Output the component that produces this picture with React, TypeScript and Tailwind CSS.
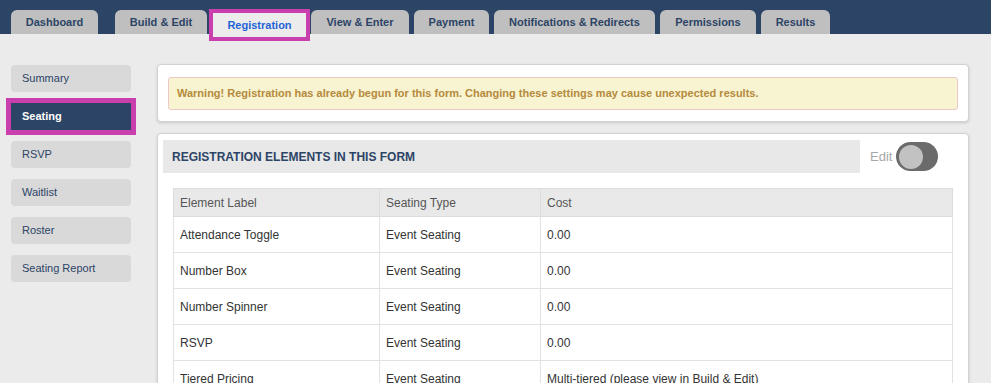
import type { ReactElement } from 'react'

const tabs: Array<{ label: string; cls: string; active?: boolean }> = [
  { label: 'Dashboard', cls: 'ml-[11px] w-[87px]' },
  { label: 'Build & Edit', cls: 'ml-[17px] w-[92px]' },
  { label: 'Registration', cls: 'ml-[2px] w-[101px]', active: true },
  { label: 'View & Enter', cls: 'ml-[1px] w-[98px]' },
  { label: 'Payment', cls: 'ml-[5px] w-[75px]' },
  { label: 'Notifications & Redirects', cls: 'ml-[5px] w-[161px]' },
  { label: 'Permissions', cls: 'ml-[5px] w-[96px]' },
  { label: 'Results', cls: 'ml-[5px] w-[69px]' },
]

const sideItems = ['Summary', 'Seating', 'RSVP', 'Waitlist', 'Roster', 'Seating Report']

const rows: Array<[string, string, string]> = [
  ['Attendance Toggle', 'Event Seating', '0.00'],
  ['Number Box', 'Event Seating', '0.00'],
  ['Number Spinner', 'Event Seating', '0.00'],
  ['RSVP', 'Event Seating', '0.00'],
  ['Tiered Pricing', 'Event Seating', 'Multi-tiered (please view in Build & Edit)'],
]

function TopTabs(): ReactElement {
  return (
    <div className="relative z-10 flex h-[34px] items-start bg-[#2c4466] pt-[10px]">
      {tabs.map((tab) =>
        tab.active ? (
          <div
            key={tab.label}
            className={`${tab.cls} -mt-[1px] flex h-[32px] items-center justify-center border-4 border-[#c93fae] bg-[#ececec] text-[11px] font-bold text-[#1f63d6]`}
          >
            {tab.label}
          </div>
        ) : (
          <div
            key={tab.label}
            className={`${tab.cls} flex h-[24px] items-center justify-center rounded-t-[6px] bg-[#bfbfbf] text-[11px] font-bold text-[#2c4466]`}
          >
            {tab.label}
          </div>
        ),
      )}
    </div>
  )
}

function Sidebar(): ReactElement {
  return (
    <aside className="flex w-[157px] shrink-0 flex-col gap-[11px] pl-[11px] pt-[31px]">
      {sideItems.map((item) =>
        item === 'Seating' ? (
          <div
            key={item}
            className="flex h-[27px] w-[120px] items-center bg-[#2c4466] pl-[11px] text-[11px] font-bold text-white outline-[5px] outline-[#c93fae]"
          >
            {item}
          </div>
        ) : (
          <div
            key={item}
            className="flex h-[27px] w-[120px] items-center rounded-[4px] bg-[#d9d9d9] pl-[11px] text-[11px] text-[#2c4466]"
          >
            {item}
          </div>
        ),
      )}
    </aside>
  )
}

function Toggle(): ReactElement {
  return (
    <div className="flex h-[29px] w-[42px] items-center rounded-full bg-[#6b6b6b] pl-[3px]">
      <div className="h-[24px] w-[24px] rounded-full bg-[#c2c2c2]" />
    </div>
  )
}

export default function App(): ReactElement {
  return (
    <div className="h-[383px] overflow-hidden bg-[#ebebeb] font-['Liberation_Sans',Arial,sans-serif]">
      <TopTabs />
      <div className="flex">
        <Sidebar />
        <main className="flex w-[812px] flex-col gap-[11px] pt-[30px]">
          <section className="rounded-[4px] border border-[#d2d2d2] bg-white px-[10px] pb-[11px] pt-[12px] shadow-[0_1px_3px_rgba(0,0,0,0.15)]">
            <div className="flex h-[33px] items-center rounded-[3px] border border-[#ebc9c9] bg-[#f8f3d1] pl-[8px] text-[11px] font-bold text-[#b58a3c]">
              Warning! Registration has already begun for this form. Changing these settings may cause
              unexpected results.
            </div>
          </section>

          <section className="rounded-[4px] border border-[#d2d2d2] bg-white px-[5px] pt-[6px] shadow-[0_1px_3px_rgba(0,0,0,0.15)]">
            <div className="flex items-center">
              <div className="flex h-[33px] w-[697px] items-center bg-[#e8e8e8] pl-[9px] text-[12px] font-bold text-[#2c4466]">
                REGISTRATION ELEMENTS IN THIS FORM
              </div>
              <span className="ml-[10px] mr-[4px] text-[13px] text-[#a8a8a8]">Edit</span>
              <Toggle />
            </div>
            <div className="px-[10px] pt-[15px]">
              <table className="w-[780px] border-collapse text-[12px] text-[#333]">
                <thead>
                  <tr className="h-[28px] bg-[#e9e9e9] text-left text-[#555]">
                    <th className="w-[206px] border border-[#dcdcdc] pl-[6px] font-normal">Element Label</th>
                    <th className="w-[161px] border border-[#dcdcdc] pl-[6px] font-normal">Seating Type</th>
                    <th className="border border-[#dcdcdc] pl-[6px] font-normal">Cost</th>
                  </tr>
                </thead>
                <tbody>
                  {rows.map((row) => (
                    <tr key={row[0]} className="h-[36px]">
                      {row.map((cell, i) => (
                        <td key={i} className="border border-[#e2e2e2] pl-[6px]">
                          {cell}
                        </td>
                      ))}
                    </tr>
                  ))}
                </tbody>
              </table>
            </div>
          </section>
        </main>
      </div>
    </div>
  )
}
